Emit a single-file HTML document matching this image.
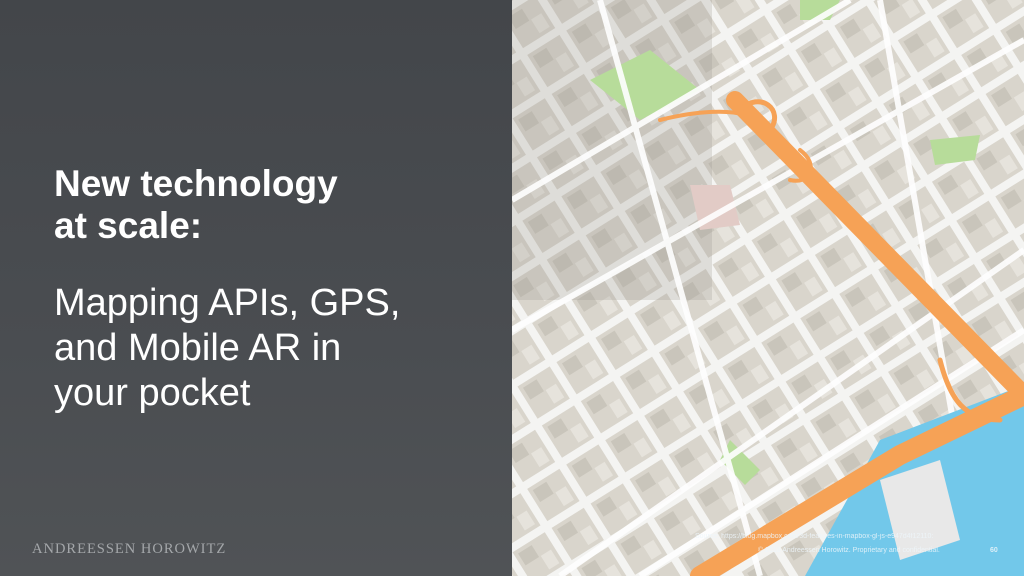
<!DOCTYPE html>
<html><head><meta charset="utf-8"><style>
body{margin:0;width:1024px;height:576px;overflow:hidden;position:relative;font-family:"Liberation Sans",sans-serif}
#left{position:absolute;left:0;top:0;width:512px;height:576px;background:linear-gradient(180deg,#43464a 0%,#4a4d51 60%,#505356 100%)}
h1{position:absolute;left:54px;top:163px;margin:0;color:#fff;font-size:37px;line-height:42px;font-weight:bold}
p.sub{position:absolute;left:54px;top:281px;margin:0;color:#fff;font-size:38px;line-height:45px}
.logo{position:absolute;left:32px;top:541px;color:#a4a7aa;font-family:"Liberation Serif",serif;font-size:14.5px;letter-spacing:1px}
#map{position:absolute;left:512px;top:0}
.ft{position:absolute;color:#eef6fb;font-size:7px;opacity:.85}
</style></head><body>
<div id="left">
<h1>New technology<br>at scale:</h1>
<p class="sub">Mapping APIs, GPS,<br>and Mobile AR in<br>your pocket</p>
<div class="logo">ANDREESSEN HOROWITZ</div>
</div>
<svg id="map" width="512" height="576" viewBox="512 0 512 576">
<defs>
<pattern id="blk" width="46" height="46" patternUnits="userSpaceOnUse" patternTransform="rotate(-32)">
<rect width="46" height="46" fill="#f4f4f2"/>
<rect x="4" y="4" width="38" height="38" fill="#d9d5cc"/>
<rect x="8" y="8" width="16" height="14" fill="#c9c5bb"/>
<rect x="26" y="22" width="12" height="16" fill="#e6e3dc"/>
</pattern>
</defs>
<rect x="512" y="0" width="512" height="576" fill="url(#blk)"/>
<rect x="512" y="0" width="200" height="300" fill="#9a968e" opacity=".25"/>
<polygon points="590,80 650,50 700,90 640,120" fill="#b7dc9a"/>
<polygon points="800,0 840,0 830,20 800,20" fill="#b7dc9a"/>
<polygon points="930,140 980,135 975,160 935,165" fill="#b7dc9a"/>
<polygon points="730,440 760,470 745,485 720,460" fill="#b7dc9a"/>
<polygon points="690,185 730,185 740,225 700,230" fill="#e2cbc6"/>
<g stroke="#fff" stroke-width="6" fill="none" opacity=".9">
<line x1="512" y1="330" x2="1024" y2="40"/>
<line x1="560" y1="576" x2="1024" y2="250"/>
<line x1="512" y1="200" x2="850" y2="0"/>
<line x1="640" y1="576" x2="1024" y2="330"/>
<line x1="880" y1="0" x2="980" y2="576"/>
<line x1="600" y1="0" x2="760" y2="576"/>
</g>
<polygon points="880,440 1024,385 1024,576 805,576" fill="#72c8ea"/>
<polygon points="880,480 940,460 960,540 900,560" fill="#e8e8e8"/>
<g stroke="#f6a256" fill="none" stroke-linecap="round">
<path d="M735,100 L1024,395" stroke-width="18"/>
<path d="M700,576 L900,455 L1024,395" stroke-width="20"/>
<path d="M740,110 C760,90 785,110 770,130" stroke-width="5"/>
<path d="M800,150 C820,165 810,185 790,180" stroke-width="4"/>
<path d="M660,120 C700,110 730,110 745,115" stroke-width="4"/>
<path d="M940,360 C950,400 965,420 1000,420" stroke-width="5"/>
</g>
</svg>
<div class="ft" style="left:695px;top:533px">Source: https://blog.mapbox.com/3d-features-in-mapbox-gl-js-e947d4f12110:</div>
<div class="ft" style="left:758px;top:547px">© 2018 Andreessen Horowitz. Proprietary and confidential.</div>
<div class="ft" style="left:990px;top:547px;font-weight:bold">60</div>
</body></html>
